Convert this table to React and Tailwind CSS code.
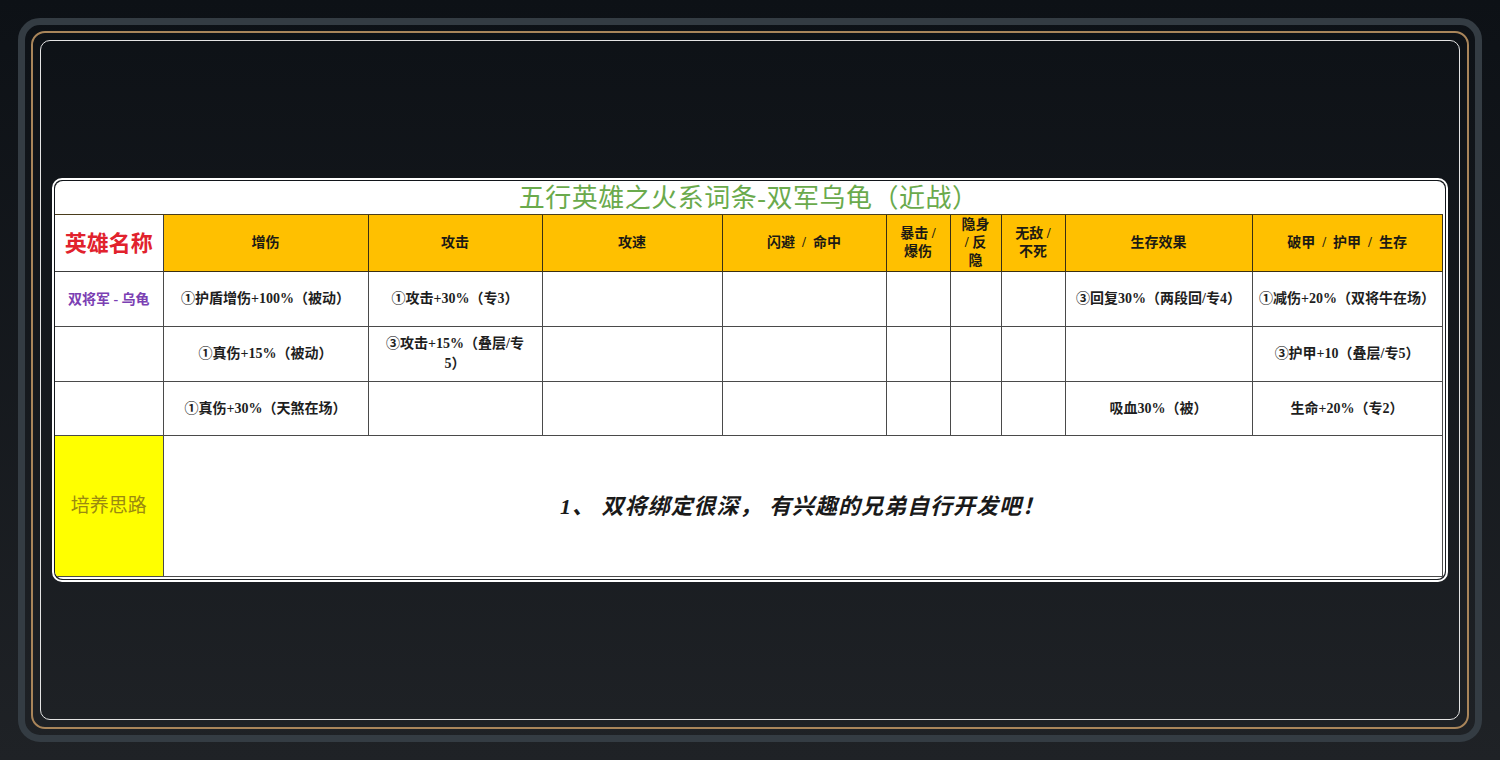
const FONT = { fontFamily: '"Liberation Serif", "Noto Sans CJK SC", serif' };

// column widths follow the sheet: name | 增伤 | 攻击 | 攻速 | 闪避 | 暴击 | 隐身 | 无敌 | 生存 | 破甲
const cols = [
  "w-[108px]",
  "w-[205px]",
  "w-[174px]",
  "w-[180px]",
  "w-[164px]",
  "w-[64px]",
  "w-[51px]",
  "w-[64px]",
  "w-[187px]",
  "w-[190px]",
];

const headers = [
  ["增伤"],
  ["攻击"],
  ["攻速"],
  ["闪避  /  命中"],
  ["暴击 /", "爆伤"],
  ["隐身", "/ 反", "隐"],
  ["无敌 /", "不死"],
  ["生存效果"],
  ["破甲  /  护甲  /  生存"],
];

const rows = [
  {
    name: "双将军 - 乌龟",
    cells: [
      ["①护盾增伤+100%（被动）"],
      ["①攻击+30%（专3）"],
      [],
      [],
      [],
      [],
      [],
      ["③回复30%（两段回/专4）"],
      ["①减伤+20%（双将牛在场）"],
    ],
  },
  {
    name: "",
    cells: [
      ["①真伤+15%（被动）"],
      ["③攻击+15%（叠层/专", "5）"],
      [],
      [],
      [],
      [],
      [],
      [],
      ["③护甲+10（叠层/专5）"],
    ],
  },
  {
    name: "",
    cells: [
      ["①真伤+30%（天煞在场）"],
      [],
      [],
      [],
      [],
      [],
      [],
      ["吸血30%（被）"],
      ["生命+20%（专2）"],
    ],
  },
];

function Lines({ lines }) {
  return lines.map((l, i) => (
    <span key={i} className="block whitespace-pre">
      {l}
    </span>
  ));
}

function SheetTable() {
  return (
    <table className="table-fixed border-collapse w-[1387px]" style={FONT}>
      <colgroup>
        {cols.map((c, i) => (
          <col key={i} className={c} />
        ))}
      </colgroup>
      <tbody>
        <tr className="h-[33px]">
          <td
            colSpan={10}
            className="border-b border-[#4a3d1c] pt-[3px] text-center text-[26px] leading-[30px] tracking-[0.5px] text-[#6aaa4c]"
          >
            五行英雄之火系词条-双军乌龟（近战）
          </td>
        </tr>

        <tr className="h-[57px]">
          <td className="border-r border-b border-[#3c3c3c] bg-white text-center text-[22px] font-bold text-[#e1222d]">
            英雄名称
          </td>
          {headers.map((h, i) => (
            <td
              key={i}
              className="border-r border-b border-[#3a2f12] bg-[#ffc000] text-center text-[14px] font-bold leading-[18px] text-[#1c1a14]"
            >
              <Lines lines={h} />
            </td>
          ))}
        </tr>

        {rows.map((r, ri) => (
          <tr key={ri} className={ri === 2 ? "h-[54px]" : "h-[55px]"}>
            <td className="whitespace-pre border-r border-b border-[#4a4a4a] text-center text-[14px] font-bold text-[#7b40b3]">
              {r.name}
            </td>
            {r.cells.map((c, ci) => (
              <td
                key={ci}
                className="border-r border-b border-[#4a4a4a] text-center text-[14px] font-bold leading-[20px] text-[#1e1e1e]"
              >
                <Lines lines={c} />
              </td>
            ))}
          </tr>
        ))}

        <tr className="h-[141px]">
          <td className="border-r border-b border-[#4a4a4a] bg-[#ffff00] text-center text-[19px] text-[#9a8a10]">
            培养思路
          </td>
          <td
            colSpan={9}
            className="border-r border-b border-[#4a4a4a] text-center text-[22px] font-bold italic tracking-[1px] text-[#1a1a1a]"
          >
            1、 双将绑定很深， 有兴趣的兄弟自行开发吧！
          </td>
        </tr>
      </tbody>
    </table>
  );
}

export default function App() {
  return (
    <div className="h-[760px] w-full bg-gradient-to-b from-[#0d1116] to-[#1f2226] p-[18px]">
      <div className="h-full rounded-[22px] border-[7px] border-[#343c43] p-[6px]">
        <div className="h-full rounded-[14px] border-2 border-[#a9855a] p-[7px]">
          <div className="flex h-full items-center rounded-[10px] border border-[#e4e4e4]">
            <div className="mx-auto w-[1396px] rounded-[10px] border-2 border-white p-px">
              <div className="h-[398px] overflow-hidden rounded-[8px] bg-white">
                <SheetTable />
              </div>
            </div>
          </div>
        </div>
      </div>
    </div>
  );
}
